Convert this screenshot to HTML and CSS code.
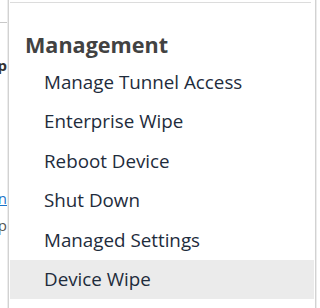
FILE: index.html
```
<!DOCTYPE html>
<html>
<head>
<meta charset="utf-8">
<link rel="stylesheet" href="styles.css">
</head>
<body>
<div class="page">
  <div class="backdrop">
    <div class="bd-rule"></div>
    <div class="bd-title">Stop</div>
    <div class="bd-link">Information</div>
    <div class="bd-text">Top</div>
  </div>
  <div class="menu">
    <div class="menu-divider"></div>
    <div class="menu-heading">Management</div>
    <ul class="menu-list">
      <li class="menu-item">Manage Tunnel Access</li>
      <li class="menu-item">Enterprise Wipe</li>
      <li class="menu-item">Reboot Device</li>
      <li class="menu-item">Shut Down</li>
      <li class="menu-item">Managed Settings</li>
      <li class="menu-item is-hover">Device Wipe</li>
    </ul>
  </div>
</div>
</body>
</html>
```
FILE: styles.css
```
* { box-sizing: border-box; }
html, body { margin: 0; padding: 0; background: #fff; }
body {
  width: 320px;
  height: 308px;
  overflow: hidden;
  font-family: "Open Sans", "Liberation Sans", sans-serif;
}
.page { position: relative; width: 320px; height: 308px; }

.backdrop {
  width: 8px;
  height: 308px;
  overflow: hidden;
  display: flex;
  flex-direction: column;
  align-items: flex-end;
  border-right: 1px solid #e4e4e4;
}
.bd-rule {
  flex: none;
  width: 8px;
  height: 1px;
  margin-top: 22px;
  background: #c8c8c8;
}
.bd-title, .bd-link, .bd-text {
  flex: none;
  white-space: nowrap;
  text-align: right;
  font-size: 15px;
  line-height: 20px;
}
.bd-title { margin-top: 32px; font-weight: 700; color: #333; }
.bd-link { margin-top: 113px; color: #1a73c8; text-decoration: underline; }
.bd-text { margin-top: 7px; color: #555; }

.menu {
  position: absolute;
  left: 8px;
  top: -10px;
  width: 308px;
  height: 330px;
  background: #fff;
  border-left: 1px solid #d2d2d2;
  border-right: 1px solid #d2d2d2;
  box-shadow: 1px 0 0 #ececec, -1px 0 0 #ececec;
}
.menu-divider {
  height: 1px;
  margin: 12px 4px 0 1px;
  background: #dcdcdc;
}
.menu-heading {
  margin: 28px 0 4px 16px;
  font-size: 21.6px;
  line-height: 28px;
  font-weight: 700;
  color: #424242;
}
.menu-list { list-style: none; margin: 0; padding: 0; }
.menu-item {
  height: 39.4px;
  line-height: 39.4px;
  padding-left: 34px;
  margin: 0 1px;
  font-size: 18.8px;
  color: #1e2c3c;
  white-space: nowrap;
}
.menu-item.is-hover { background: #ebebeb; }
```
